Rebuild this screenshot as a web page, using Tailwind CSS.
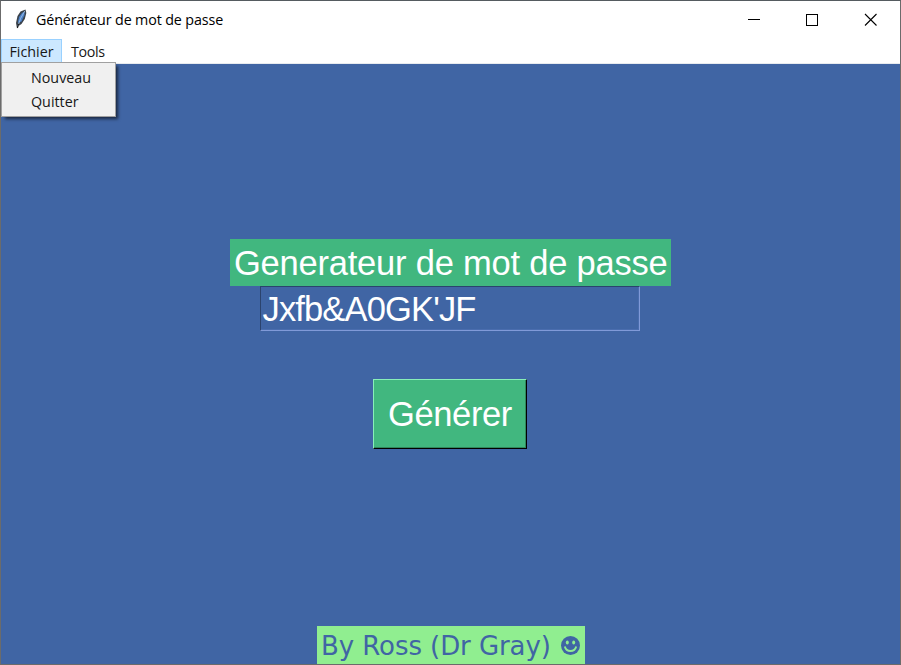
<!DOCTYPE html>
<html lang="fr">
<head>
<meta charset="utf-8">
<title>Générateur de mot de passe</title>
<script src="https://cdn.jsdelivr.net/npm/@tailwindcss/browser@4"></script>
</head>
<body class="overflow-hidden">
<div class="w-[901px] h-[665px] flex flex-col bg-[#4065a4] border border-[#6b6b6b] border-t-[#555b60] relative">
  <header class="h-[38px] shrink-0 bg-white flex items-center pl-[13px] text-black">
    <svg class="w-[14px] h-[20px] shrink-0 mb-[2px]" viewBox="0 0 14 20"><path d="M3 19.500 2 14 3.500 7 6.500 2.500 11.500 .5 12.300 4 10.800 10 7.500 15 4.500 17Z" fill="#3b434c"/><path d="M3.800 14 5 8 8 4 10.500 2.500 10.500 6 7.500 12.500Z" fill="#4c82c9"/><path d="M4 17 6.500 9.500 10.800 2" stroke="#a9c8ea" stroke-width=".8" fill="none"/><path d="M3.500 19 4.500 15" stroke="#111" fill="none"/></svg>
    <span class="ml-[8px] text-[14.3px] leading-[20px] whitespace-nowrap font-['Open_Sans','Noto_Sans',sans-serif] tracking-[-0.13px]">Générateur de mot de passe</span>
    <svg class="ml-auto mr-[23px] w-[130px] h-[14px] shrink-0" viewBox="0 0 130 14" fill="none" stroke="#000" shape-rendering="crispEdges"><path d="M1 6.500H13M59.500 1.500H70.500V12.500H59.500Z"/><path d="M118 1 129.500 12.500M129.500 1 118 12.500" stroke-width="1.100" shape-rendering="auto"/></svg>
  </header>
  <nav class="h-[25px] shrink-0 bg-white border-b border-[#e8ebef] flex text-[14.3px] leading-[23px] font-['Open_Sans','Noto_Sans',sans-serif] text-[#171717]">
    <div class="relative w-[61px] h-[24px] bg-[#cce8ff] border border-[#99d1ff] text-center">Fichier
      <div class="absolute left-[-1px] top-[22px] w-[115px] h-[55px] bg-[#f0f0f0] border border-[#a0a0a0] pt-[3px] pl-[29px] text-left leading-[24px] shadow-[3px_3px_3px_-1px_rgba(0,0,0,0.6)]">
        <div>Nouveau</div>
        <div>Quitter</div>
      </div>
    </div>
    <div class="ml-[9px] pt-px tracking-[-0.35px]">Tools</div>
  </nav>
  <main class="flex-1 flex flex-col items-center pt-[175px] text-white text-[34.5px] font-['Liberation_Sans',Arial,sans-serif]">
    <h1 class="w-[441px] h-[47px] bg-[#41b77f] pl-[4px] leading-[48px] whitespace-nowrap tracking-[-0.22px]">Generateur de mot de passe</h1>
    <div class="mr-[2px] w-[380px] h-[45px] border border-t-[#2b436d] border-l-[#2b436d] border-r-[#809ad8] border-b-[#809ad8] shadow-[inset_-1px_-1px_0_#4a6dae] pl-[2px] leading-[44px] whitespace-nowrap tracking-[-0.85px]">Jxfb&amp;A0GK'JF</div>
    <button class="mr-[2px] w-[154px] h-[70px] mt-[48px] bg-[#41b77f] border border-t-[#88efb9] border-l-[#88efb9] border-r-black border-b-black shadow-[inset_-1px_-1px_0_#30875e] pl-px text-center leading-[69px] tracking-[-0.4px]">Générer</button>
    <footer class="mt-auto ml-[1px] w-[268px] h-[38px] bg-[#90ee90] text-[#4065a4] flex items-center pl-[4px] font-['DejaVu_Sans',sans-serif] text-[26px] leading-[38px] whitespace-nowrap"><span class="pt-[2px] tracking-[-0.07px]">By Ross (Dr Gray)</span>
      <svg class="ml-auto mr-[5px] mt-px w-[19px] h-[19px] shrink-0" viewBox="0 0 19 19"><circle cx="9.500" cy="9.500" r="9.500" fill="#4065a4"/><ellipse cx="6.300" cy="6.500" rx="1.500" ry="2" fill="#90ee90"/><ellipse cx="12.700" cy="6.500" rx="1.500" ry="2" fill="#90ee90"/><path d="M3.800 10.500Q5 15 9.500 15T15.200 10.500" stroke="#90ee90" stroke-width="1.900" fill="none"/></svg>
    </footer>
  </main>
</div>
</body>
</html>
